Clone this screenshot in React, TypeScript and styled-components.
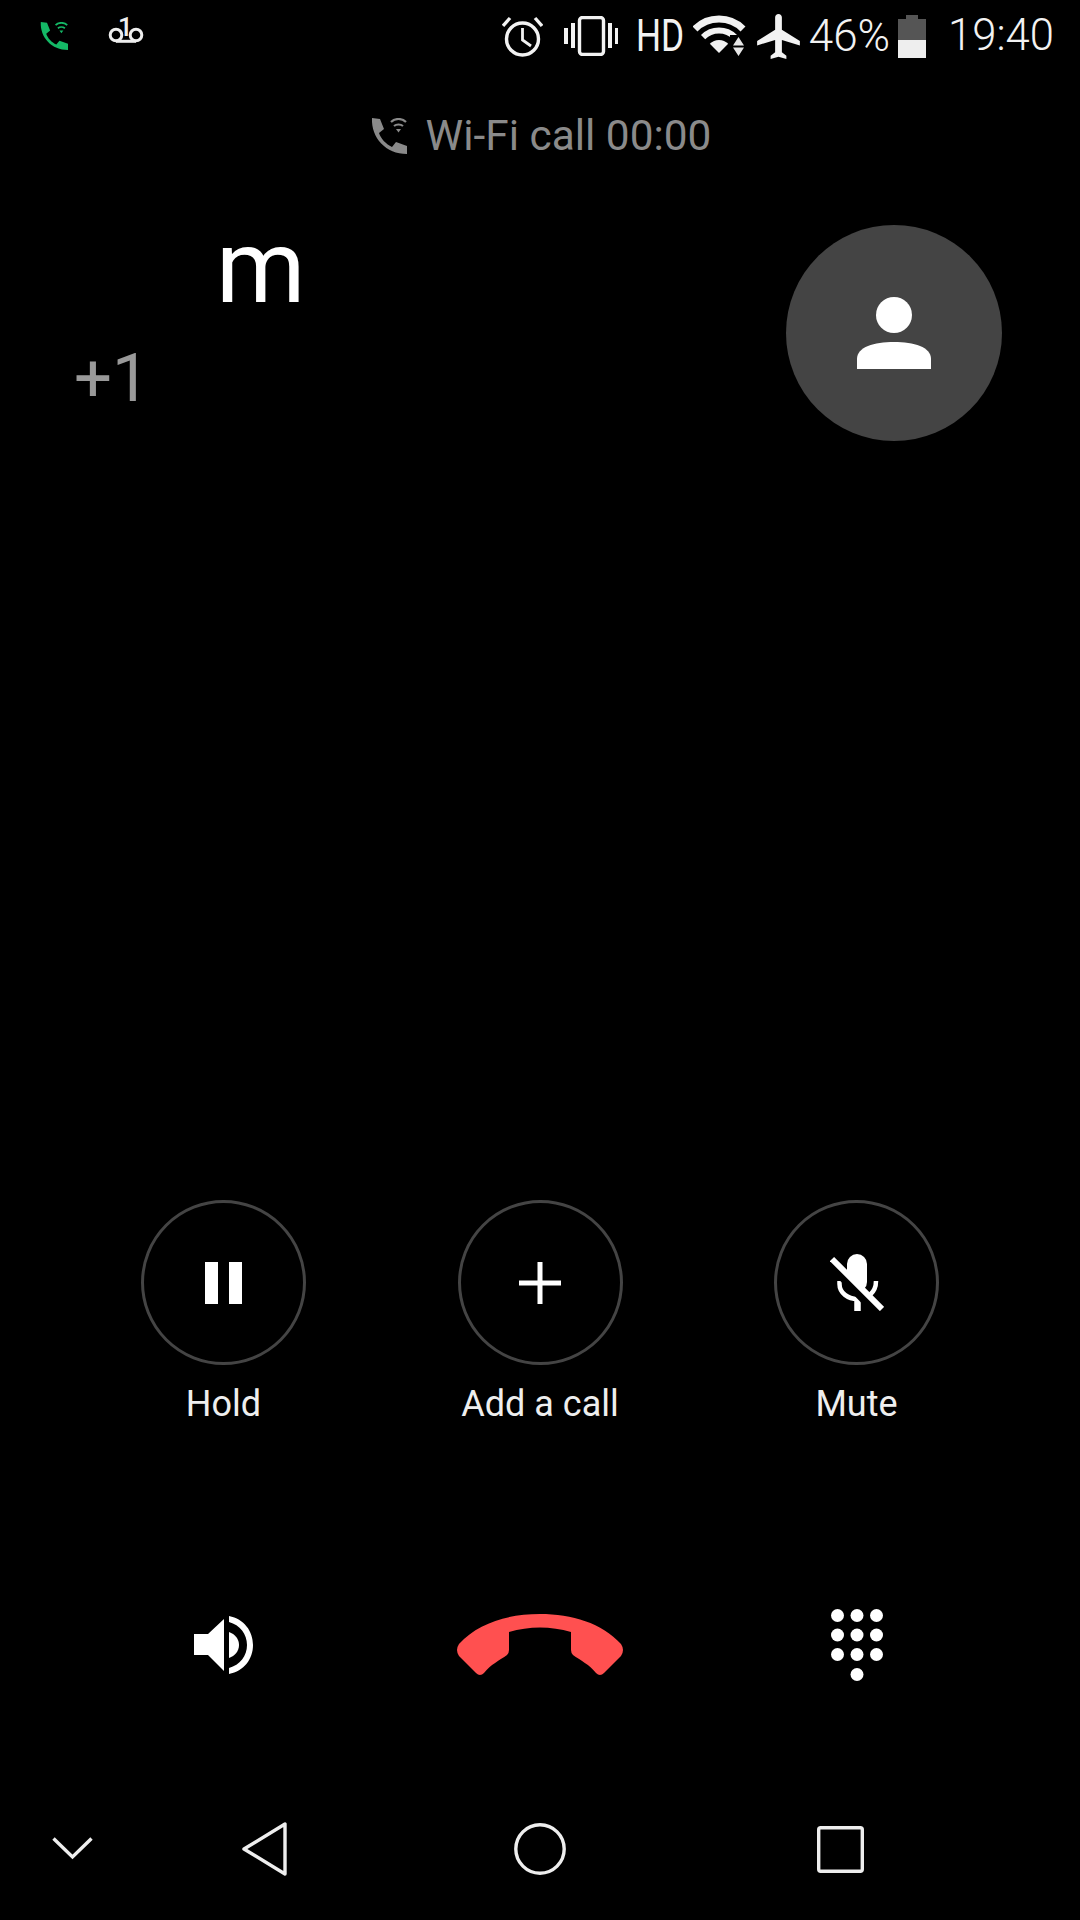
import React from 'react';
import styled, { createGlobalStyle } from 'styled-components';

const GlobalStyle = createGlobalStyle`
  html, body {
    margin: 0;
    padding: 0;
    background: #000;
    font-family: Roboto, "Liberation Sans", sans-serif;
  }
`;

const Screen = styled.div`
  width: 1080px;
  height: 1920px;
  background: #000;
  color: #fff;
  display: flex;
  flex-flow: column;
  overflow: hidden;
`;

const StatusBar = styled.div`
  height: 72px;
  display: flex;
  align-items: center;
  justify-content: space-between;
  padding: 0 26px 0 40px;
`;

const StatusGroup = styled.div<{ $gap: number }>`
  display: flex;
  align-items: center;
  gap: ${props => props.$gap}px;
`;

const StatusIcon = styled.svg<{ $left?: number }>`
  flex: none;
  margin-left: ${props => props.$left || 0}px;
`;

const Voicemail = styled.svg`
  margin-top: -12px;
  overflow: visible;
`;

const StatusText = styled.span<{ $left?: number; $size?: number }>`
  font-size: ${props => props.$size || 44}px;
  font-weight: 300;
  line-height: 50px;
  color: #f2f2f2;
  margin-left: ${props => props.$left || 0}px;
`;

const HdLabel = styled(StatusText)`
  display: inline-block;
  width: 47px;
  font-weight: 400;
  transform: scaleX(0.8);
  transform-origin: left center;
  white-space: nowrap;
`;

const CallState = styled.div`
  height: 126px;
  display: flex;
  align-items: center;
  justify-content: center;
  gap: 19px;
  padding: 2px 0 0 2px;
  box-sizing: border-box;
  color: #8a8a8a;
`;

const CallStateText = styled.span`
  font-size: 42.4px;
  line-height: 48px;
`;

const Header = styled.div`
  display: flex;
  justify-content: space-between;
  padding: 9px 78px 0 74px;
`;

const CallerInfo = styled.div`
  display: flex;
  flex-flow: column;
`;

const CallerName = styled.div`
  font-size: 102px;
  line-height: 120px;
  margin-left: 142px;
  color: #fff;
`;

const CallerNumber = styled.div`
  font-size: 67px;
  line-height: 80px;
  color: #999;
  margin-top: 11px;
`;

const Avatar = styled.div`
  width: 216px;
  height: 216px;
  margin-top: 18px;
  border-radius: 50%;
  background: #444;
  display: flex;
  align-items: center;
  justify-content: center;
`;

const Spacer = styled.div`
  flex: 1;
`;

const ThreeColumns = styled.div<{ $height: number }>`
  display: grid;
  grid-template-columns: repeat(3, 316.5px);
  justify-content: center;
  height: ${props => props.$height}px;
`;

const Action = styled.div`
  display: flex;
  flex-flow: column;
  align-items: center;
`;

const ActionCircle = styled.div`
  width: 165px;
  height: 165px;
  box-sizing: border-box;
  border: 3px solid #444;
  border-radius: 50%;
  display: flex;
  align-items: center;
  justify-content: center;
`;

const ActionLabel = styled.div`
  font-size: 36px;
  line-height: 40px;
  color: #eee;
  margin-top: 19px;
`;

const ControlCell = styled.div`
  display: flex;
  align-items: center;
  justify-content: center;
`;

const NavBar = styled.div`
  height: 142px;
  display: grid;
  grid-template-columns: 144px 240px 312px 288px;
  align-items: center;
  justify-items: center;
`;

const WifiCallIcon: React.FC<{ size: number; color: string }> = ({ size, color }) => (
  <svg width={size} height={size} viewBox="0 0 36 36">
    <path
      fill={color}
      d="M1 0 L9 1 L13 11 L8 15 C10 21 15 26 21 29 L25 24 L36 28 L36 36 C15 36 0 20 1 0 Z"
    />
    <g fill="none" stroke={color} strokeWidth="2.2">
      <path d="M20 4 C24 0 31 0 35 4" />
      <path d="M23 8 C25.5 6 29.5 6 32 8" />
    </g>
    <path fill={color} d="M25 11 L30 11 L27.5 14.5 Z" />
  </svg>
);

const App: React.FC = () => {
  return (
    <Screen>
      <GlobalStyle />
      <StatusBar>
        <StatusGroup $gap={41}>
          <WifiCallIcon size={28} color="#14b866" />
          <Voicemail width="34" height="26" viewBox="0 0 34 26">
            <g fill="none" stroke="#eee" strokeWidth="3">
              <circle cx="7" cy="18" r="5.8" />
              <circle cx="27" cy="18" r="5.8" />
              <path d="M7 24.3 H27" />
            </g>
            <text x="16.5" y="19" fontSize="26" fontWeight="500" fill="#eee" textAnchor="middle">1</text>
          </Voicemail>
        </StatusGroup>
        <StatusGroup $gap={0}>
          <StatusIcon width="41" height="42" viewBox="0 0 41 42">
            <g fill="none" stroke="#f2f2f2" strokeWidth="3.4">
              <circle cx="20.5" cy="24" r="16" />
              <path d="M1 11 L8 3" />
              <path d="M40 11 L33 3" />
              <path strokeWidth="2.8" d="M20.5 13 V25 L29 31" />
            </g>
          </StatusIcon>
          <StatusIcon $left={21} width="54" height="40" viewBox="0 0 54 40">
            <rect x="15.5" y="1.5" width="24" height="37" rx="3" fill="none" stroke="#f2f2f2" strokeWidth="3.4" />
            <g fill="#f2f2f2">
              <rect x="0" y="12" width="4" height="16" />
              <rect x="7" y="7" width="4" height="25" />
              <rect x="44" y="7" width="4" height="25" />
              <rect x="51" y="12" width="3" height="16" />
            </g>
          </StatusIcon>
          <HdLabel $left={18}>HD</HdLabel>
          <StatusIcon $left={10} width="53" height="42" viewBox="0 0 53 42">
            <g fill="none" stroke="#f2f2f2" strokeWidth="7">
              <path d="M2 14 A34 34 0 0 1 50 14" />
              <path strokeWidth="6" d="M10.1 22.1 A22.5 22.5 0 0 1 41.9 22.1" />
            </g>
            <path fill="#f2f2f2" d="M26 38 L16.8 28.8 A13 13 0 0 1 35.2 28.8 Z" />
            <rect x="37" y="20" width="16" height="22" fill="#000" />
            <path fill="#e6e6e6" d="M40 30.5 H51 L45.5 22 Z M40 32.5 H51 L45.5 41 Z" />
          </StatusIcon>
          <StatusIcon $left={11} width="43" height="45" viewBox="2 2 19 20">
            <path
              fill="#f2f2f2"
              d="M21 16v-2l-8-5V3.5c0-.83-.67-1.5-1.5-1.5S10 2.67 10 3.5V9l-8 5v2l8-2.5V19l-2 1.5V22l3.5-1 3.5 1v-1.5L13 19v-5.5l8 2.5z"
            />
          </StatusIcon>
          <StatusText $left={9}>46%</StatusText>
          <StatusIcon $left={8} width="28" height="43" viewBox="0 0 28 43">
            <path fill="#555" d="M8 0 H20 V4 H28 V25 H0 V4 H8 Z" />
            <rect x="0" y="25" width="28" height="18" fill="#eee" />
          </StatusIcon>
          <StatusText $left={22} $size={43.6}>19:40</StatusText>
        </StatusGroup>
      </StatusBar>

      <CallState>
        <WifiCallIcon size={36} color="#8a8a8a" />
        <CallStateText>Wi-Fi call 00:00</CallStateText>
      </CallState>

      <Header>
        <CallerInfo>
          <CallerName>m</CallerName>
          <CallerNumber>+1</CallerNumber>
        </CallerInfo>
        <Avatar>
          <svg width="74" height="72" viewBox="0 0 74 72">
            <circle cx="37" cy="18" r="18" fill="#fff" />
            <path fill="#fff" d="M0 72 V62 C0 50 17 45 37 45 C57 45 74 50 74 62 V72 Z" />
          </svg>
        </Avatar>
      </Header>

      <Spacer />

      <ThreeColumns $height={312}>
        <Action>
          <ActionCircle>
            <svg width="37" height="42" viewBox="0 0 37 42">
              <rect x="0" y="0" width="13" height="42" fill="#fff" />
              <rect x="24" y="0" width="13" height="42" fill="#fff" />
            </svg>
          </ActionCircle>
          <ActionLabel>Hold</ActionLabel>
        </Action>
        <Action>
          <ActionCircle>
            <svg width="42" height="42" viewBox="0 0 42 42">
              <rect x="18.5" y="0" width="5" height="42" fill="#fff" />
              <rect x="0" y="18.5" width="42" height="5" fill="#fff" />
            </svg>
          </ActionCircle>
          <ActionLabel>Add a call</ActionLabel>
        </Action>
        <Action>
          <ActionCircle>
            <svg width="54" height="57" viewBox="0 0 54 57">
              <rect x="17" y="0" width="20" height="38" rx="10" fill="#fff" />
              <g fill="none" stroke="#fff" strokeWidth="4.5">
                <path d="M9.5 27 V30 C9.5 39 18 45 27.5 45 C37 45 46 39 46 27" />
                <path strokeWidth="6.5" d="M27.5 45 V57" />
              </g>
              <path stroke="#000" strokeWidth="10" d="M0 9 L48 59" />
              <path stroke="#fff" strokeWidth="6" d="M2 5 L52 55" />
            </svg>
          </ActionCircle>
          <ActionLabel>Mute</ActionLabel>
        </Action>
      </ThreeColumns>

      <ThreeColumns $height={266}>
        <ControlCell>
          <svg width="59" height="58" viewBox="0 0 59 58">
            <path fill="#fff" d="M0 18 H14 L30 3 V55 L14 39 H0 Z" />
            <path fill="#fff" d="M35 0 C50 3 59 15 59 29 C59 43 50 55 35 58 V52 C46 49 53 40 53 29 C53 18 46 9 35 6 Z" />
            <path fill="#fff" d="M35 16 C41 18 45 23 45 29 C45 35 41 40 35 42 Z" />
          </svg>
        </ControlCell>
        <ControlCell>
          <svg width="170" height="64" viewBox="-1 0 170 64">
            <path
              fill="#ff5050"
              d="M3 31 C22 10 52 1 84 1 C116 1 146 10 165 31 Q169 37 165 43 L148 60 Q144 64 140 60 C134 52 124 47 117 42 Q115 40 115 37 V19 C95 13 73 13 53 19 V37 Q53 40 51 42 C44 47 34 52 28 60 Q24 64 20 60 L3 43 Q-1 37 3 31 Z"
            />
          </svg>
        </ControlCell>
        <ControlCell>
          <svg width="52" height="72" viewBox="0 0 52 72" fill="#fff">
            {[6.5, 26, 45.5].map(cx =>
              [6.5, 26, 45.5].map(cy => <circle key={`${cx}-${cy}`} cx={cx} cy={cy} r="6.5" />)
            )}
            <circle cx="26" cy="65.5" r="6.5" />
          </svg>
        </ControlCell>
      </ThreeColumns>

      <NavBar>
        <svg width="41" height="24" viewBox="0 0 41 24">
          <path d="M1.5 1.5 L20.5 20 L39.5 1.5" fill="none" stroke="#eee" strokeWidth="3.4" />
        </svg>
        <svg width="45" height="54" viewBox="0 0 45 54">
          <path d="M43 2 V52 L2 27 Z" fill="none" stroke="#eee" strokeWidth="3.4" strokeLinejoin="round" />
        </svg>
        <svg width="52" height="52" viewBox="0 0 52 52">
          <circle cx="26" cy="26" r="24.2" fill="none" stroke="#eee" strokeWidth="3.4" />
        </svg>
        <svg width="47" height="47" viewBox="0 0 47 47">
          <rect x="1.7" y="1.7" width="43.6" height="43.6" rx="2" fill="none" stroke="#eee" strokeWidth="3.4" />
        </svg>
      </NavBar>
    </Screen>
  );
};

export default App;
